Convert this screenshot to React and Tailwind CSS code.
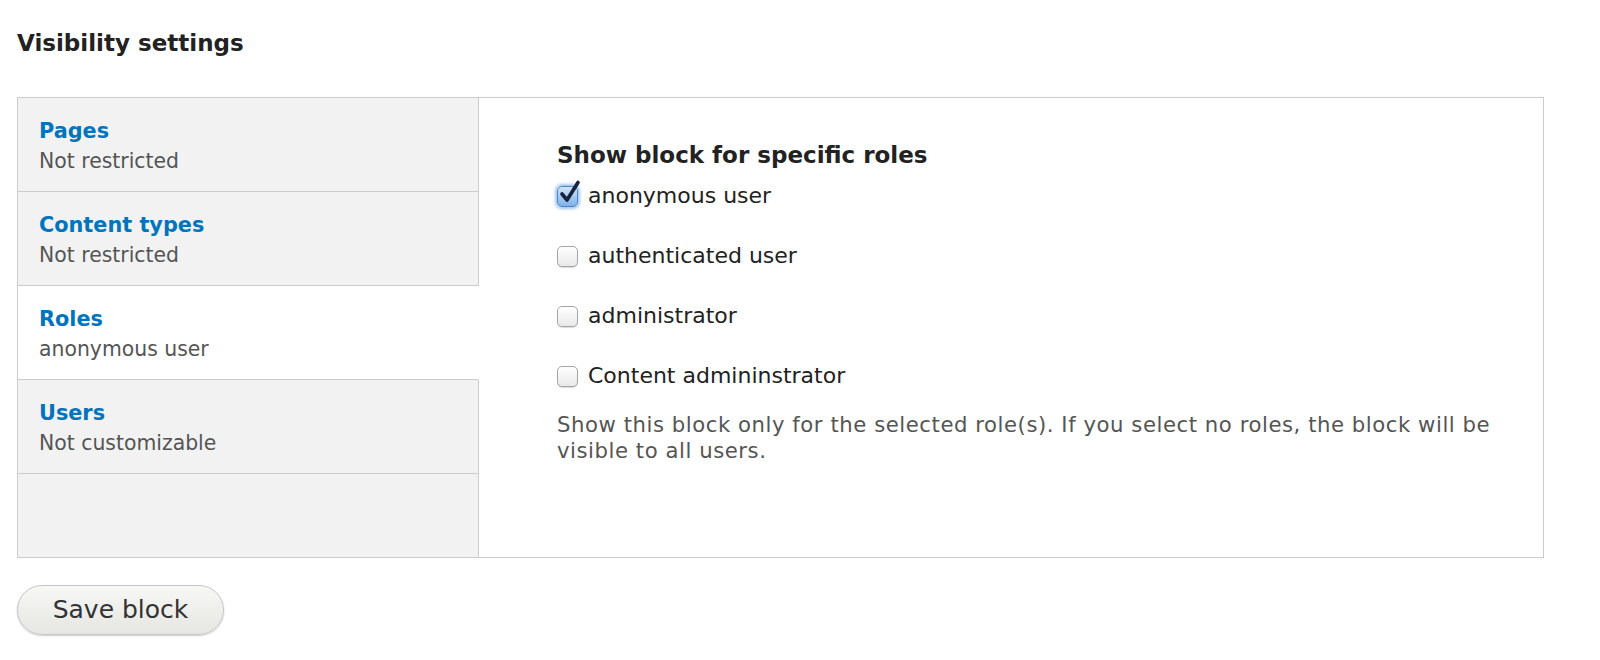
import React, { useState } from 'react';

const FONT = { fontFamily: '"DejaVu Sans", "Liberation Sans", sans-serif' };

const tabs = [
    { id: 'pages', title: 'Pages', summary: 'Not restricted' },
    { id: 'types', title: 'Content types', summary: 'Not restricted' },
    { id: 'roles', title: 'Roles', summary: 'anonymous user' },
    { id: 'users', title: 'Users', summary: 'Not customizable' },
];

const roles = [
    { id: 'anonymous', label: 'anonymous user' },
    { id: 'authenticated', label: 'authenticated user' },
    { id: 'administrator', label: 'administrator' },
    { id: 'content_admin', label: 'Content admininstrator' },
];

const Checkbox = ({ checked, onChange }) => (
    <button
        type="button"
        onClick={onChange}
        className="relative h-[21px] w-[21px] shrink-0"
    >
        {checked ? (
            <>
                <span className="absolute inset-0 rounded-[5px] border border-[#4a86c8] bg-gradient-to-b from-[#cfe4fa] to-[#7eb3e8] shadow-[0_0_3px_2px_rgba(90,150,220,0.55)]" />
                <svg
                    viewBox="0 0 24 24"
                    className="absolute left-[1px] top-[-6px] h-[25px] w-[24px]"
                >
                    <path
                        d="M4 13.5 L9 19.5 L20 2"
                        fill="none"
                        stroke="#16233d"
                        strokeWidth="3.6"
                        strokeLinecap="round"
                        strokeLinejoin="round"
                    />
                </svg>
            </>
        ) : (
            <span className="absolute inset-0 rounded-[5px] border border-[#a5a5a5] bg-gradient-to-b from-white to-[#e9e9e9] shadow-[0_1px_1px_rgba(0,0,0,0.15)]" />
        )}
    </button>
);

const App = () => {
    const [activeTab, setActiveTab] = useState('roles');
    const [checked, setChecked] = useState({ anonymous: true });

    const toggleRole = id => {
        setChecked(prev => ({ ...prev, [id]: !prev[id] }));
    };

    return (
        <div className="min-h-[660px] bg-white pl-[17px] pr-[56px] pt-[28px]" style={FONT}>
            <h2 className="text-[23px] font-bold leading-[30px] text-[#222]">Visibility settings</h2>

            <div className="mt-[39px] flex h-[461px] border border-[#ccc]">
                <div className="flex w-[461px] shrink-0 flex-col bg-[#f2f2f2]">
                    {tabs.map(tab => {
                        const active = tab.id === activeTab;
                        return (
                            <div
                                key={tab.id}
                                onClick={() => setActiveTab(tab.id)}
                                className={`h-[94px] cursor-pointer border-b border-[#ccc] pl-[21px] pt-[18px] ${
                                    active ? 'border-r border-r-white bg-white' : 'border-r'
                                }`}
                            >
                                <div className="text-[20.8px] font-bold leading-[30px] text-[#0074bd]">
                                    {tab.title}
                                </div>
                                <div className="text-[20.4px] leading-[30px] text-[#555]">{tab.summary}</div>
                            </div>
                        );
                    })}
                    <div className="flex-1 border-r border-[#ccc]" />
                </div>

                <div className="flex-1 pl-[78px] pr-[40px] pt-[42px]">
                    <h3 className="text-[23px] font-bold leading-[30px] text-[#222]">
                        Show block for specific roles
                    </h3>
                    <div className="mt-[11px] flex flex-col gap-[30px]">
                        {roles.map(role => (
                            <label key={role.id} className="flex h-[30px] items-center gap-[10px]">
                                <Checkbox checked={!!checked[role.id]} onChange={() => toggleRole(role.id)} />
                                <span className="text-[22px] leading-[30px] text-[#222]">{role.label}</span>
                            </label>
                        ))}
                    </div>
                    <p className="mt-[21px] max-w-[960px] text-[21.2px] leading-[26px] tracking-[0.55px] text-[#555]">
                        Show this block only for the selected role(s). If you select no roles, the block will be
                        visible to all users.
                    </p>
                </div>
            </div>

            <button
                type="button"
                className="mt-[27px] h-[50px] w-[207px] rounded-full border border-[#c6c6c6] bg-gradient-to-b from-[#f7f7f5] to-[#e6e6e2] text-[25px] text-[#333] shadow-[0_1px_2px_rgba(0,0,0,0.2)]"
            >
                Save block
            </button>
        </div>
    );
};

export default App;
